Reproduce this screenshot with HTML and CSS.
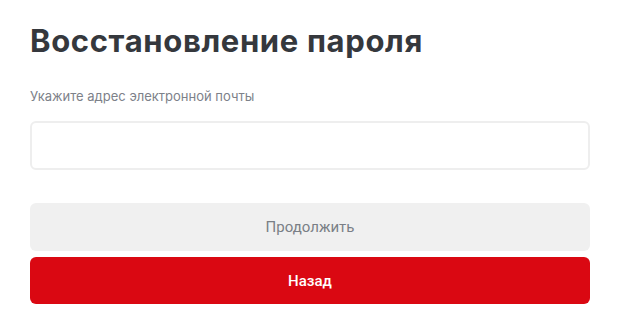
FILE: index.html
```html
<!DOCTYPE html>
<html lang="ru">
<head>
  <meta charset="UTF-8">
  <meta name="viewport" content="width=device-width, initial-scale=1.0">
  <title>Восстановление пароля</title>
  <link rel="stylesheet" href="styles.css">
</head>
<body>
  <div class="container">
    <h1>Восстановление пароля</h1>

    <form class="recover-form" onsubmit="return false">
      <label class="field-label" for="email">Укажите адрес электронной почты</label>
      <input class="field-input" type="email" id="email">

      <div class="actions">
        <button class="btn btn-continue" type="submit">Продолжить</button>
        <button class="btn btn-back" type="button">Назад</button>
      </div>
    </form>
  </div>
</body>
</html>
```

FILE: styles.css
```css
body {
  font-family: 'Inter', 'Open Sans', sans-serif;
  background: #ffffff;
  color: #35383d;
  margin: 0;
  padding: 0;
}

.container {
  width: 560px;
  padding: 23px 30px;
}

h1 {
  margin: 0;
  font-size: 31px;
  line-height: 36px;
  font-weight: 700;
  color: #35383d;
  letter-spacing: 0.65px;
}

.recover-form {
  display: flex;
  flex-direction: column;
  margin-top: 29px;
}

.field-label {
  font-size: 13px;
  line-height: 16px;
  color: #7d8189;
}

.field-input {
  box-sizing: border-box;
  height: 49px;
  margin-top: 17px;
  border: 2px solid #eeeeee;
  border-radius: 6px;
  font-size: 15px;
  padding: 0 14px;
  outline: none;
}

.actions {
  display: flex;
  flex-direction: column;
  gap: 6px;
  margin-top: 33px;
}

.btn {
  font-family: 'Roboto', sans-serif;
  font-size: 15px;
  height: 48px;
  border: none;
  border-radius: 6px;
  cursor: pointer;
}

.btn-continue {
  background-color: #f0f0f0;
  color: #7a7f86;
}

.btn-back {
  background-color: #da0812;
  color: #ffffff;
  font-weight: 500;
  height: 47px;
}
```
